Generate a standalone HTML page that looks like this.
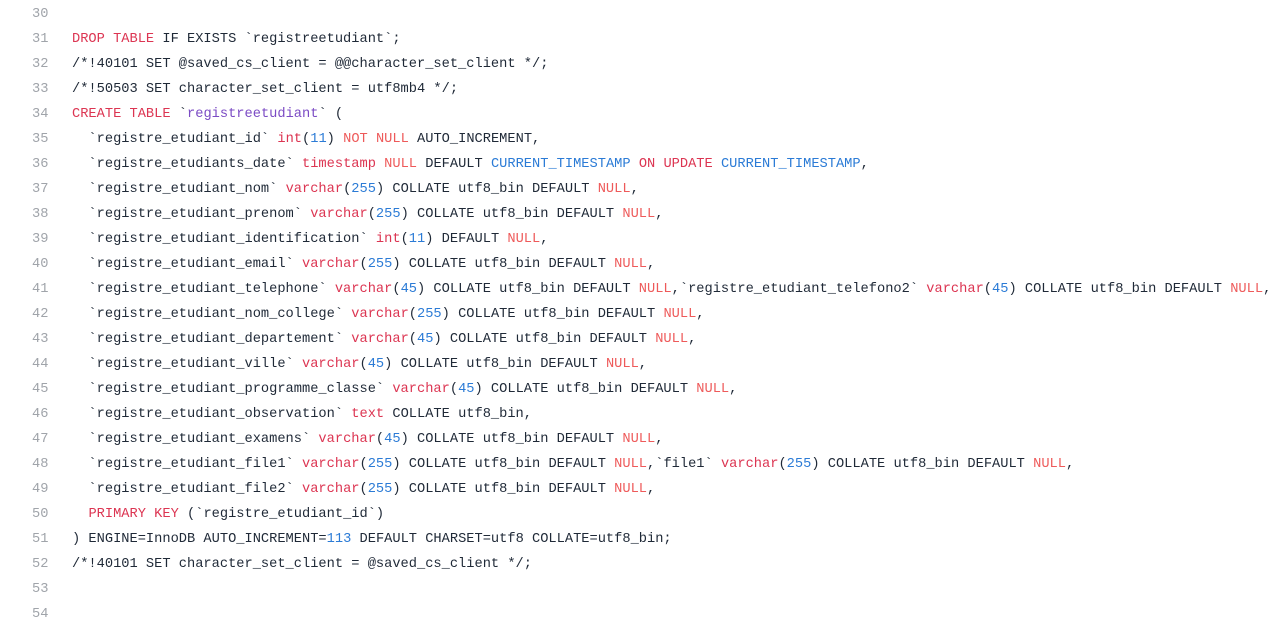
<!DOCTYPE html>
<html><head><meta charset="utf-8"><style>
body{margin:0;background:#fff;width:1275px;height:614px;overflow:hidden}
.c{font-family:"Liberation Mono",monospace;font-size:13.7px;color:#1f2937;position:relative;padding-top:2px}
.l{height:25px;line-height:25px;position:relative}
.n{position:absolute;left:32px;color:#a0a4aa}
.t{position:absolute;left:72px;white-space:pre}
.k{color:#dc3552}.u{color:#ee5a5a}.b{color:#2b7bd6}.p{color:#7b4bc4}
</style></head><body><div class="c"><div class="l"><span class="n">30</span><span class="t"></span></div><div class="l"><span class="n">31</span><span class="t"><span class="k">DROP TABLE</span> IF EXISTS `registreetudiant`;</span></div><div class="l"><span class="n">32</span><span class="t">/*!40101 SET @saved_cs_client = @@character_set_client */;</span></div><div class="l"><span class="n">33</span><span class="t">/*!50503 SET character_set_client = utf8mb4 */;</span></div><div class="l"><span class="n">34</span><span class="t"><span class="k">CREATE TABLE</span> `<span class="p">registreetudiant</span>` (</span></div><div class="l"><span class="n">35</span><span class="t">  `registre_etudiant_id` <span class="k">int</span>(<span class="b">11</span>) <span class="u">NOT NULL</span> AUTO_INCREMENT,</span></div><div class="l"><span class="n">36</span><span class="t">  `registre_etudiants_date` <span class="k">timestamp</span> <span class="u">NULL</span> DEFAULT <span class="b">CURRENT_TIMESTAMP</span> <span class="k">ON UPDATE</span> <span class="b">CURRENT_TIMESTAMP</span>,</span></div><div class="l"><span class="n">37</span><span class="t">  `registre_etudiant_nom` <span class="k">varchar</span>(<span class="b">255</span>) COLLATE utf8_bin DEFAULT <span class="u">NULL</span>,</span></div><div class="l"><span class="n">38</span><span class="t">  `registre_etudiant_prenom` <span class="k">varchar</span>(<span class="b">255</span>) COLLATE utf8_bin DEFAULT <span class="u">NULL</span>,</span></div><div class="l"><span class="n">39</span><span class="t">  `registre_etudiant_identification` <span class="k">int</span>(<span class="b">11</span>) DEFAULT <span class="u">NULL</span>,</span></div><div class="l"><span class="n">40</span><span class="t">  `registre_etudiant_email` <span class="k">varchar</span>(<span class="b">255</span>) COLLATE utf8_bin DEFAULT <span class="u">NULL</span>,</span></div><div class="l"><span class="n">41</span><span class="t">  `registre_etudiant_telephone` <span class="k">varchar</span>(<span class="b">45</span>) COLLATE utf8_bin DEFAULT <span class="u">NULL</span>,`registre_etudiant_telefono2` <span class="k">varchar</span>(<span class="b">45</span>) COLLATE utf8_bin DEFAULT <span class="u">NULL</span>,</span></div><div class="l"><span class="n">42</span><span class="t">  `registre_etudiant_nom_college` <span class="k">varchar</span>(<span class="b">255</span>) COLLATE utf8_bin DEFAULT <span class="u">NULL</span>,</span></div><div class="l"><span class="n">43</span><span class="t">  `registre_etudiant_departement` <span class="k">varchar</span>(<span class="b">45</span>) COLLATE utf8_bin DEFAULT <span class="u">NULL</span>,</span></div><div class="l"><span class="n">44</span><span class="t">  `registre_etudiant_ville` <span class="k">varchar</span>(<span class="b">45</span>) COLLATE utf8_bin DEFAULT <span class="u">NULL</span>,</span></div><div class="l"><span class="n">45</span><span class="t">  `registre_etudiant_programme_classe` <span class="k">varchar</span>(<span class="b">45</span>) COLLATE utf8_bin DEFAULT <span class="u">NULL</span>,</span></div><div class="l"><span class="n">46</span><span class="t">  `registre_etudiant_observation` <span class="k">text</span> COLLATE utf8_bin,</span></div><div class="l"><span class="n">47</span><span class="t">  `registre_etudiant_examens` <span class="k">varchar</span>(<span class="b">45</span>) COLLATE utf8_bin DEFAULT <span class="u">NULL</span>,</span></div><div class="l"><span class="n">48</span><span class="t">  `registre_etudiant_file1` <span class="k">varchar</span>(<span class="b">255</span>) COLLATE utf8_bin DEFAULT <span class="u">NULL</span>,`file1` <span class="k">varchar</span>(<span class="b">255</span>) COLLATE utf8_bin DEFAULT <span class="u">NULL</span>,</span></div><div class="l"><span class="n">49</span><span class="t">  `registre_etudiant_file2` <span class="k">varchar</span>(<span class="b">255</span>) COLLATE utf8_bin DEFAULT <span class="u">NULL</span>,</span></div><div class="l"><span class="n">50</span><span class="t">  <span class="k">PRIMARY KEY</span> (`registre_etudiant_id`)</span></div><div class="l"><span class="n">51</span><span class="t">) ENGINE=InnoDB AUTO_INCREMENT=<span class="b">113</span> DEFAULT CHARSET=utf8 COLLATE=utf8_bin;</span></div><div class="l"><span class="n">52</span><span class="t">/*!40101 SET character_set_client = @saved_cs_client */;</span></div><div class="l"><span class="n">53</span><span class="t"></span></div><div class="l"><span class="n">54</span><span class="t"></span></div></div></body></html>
